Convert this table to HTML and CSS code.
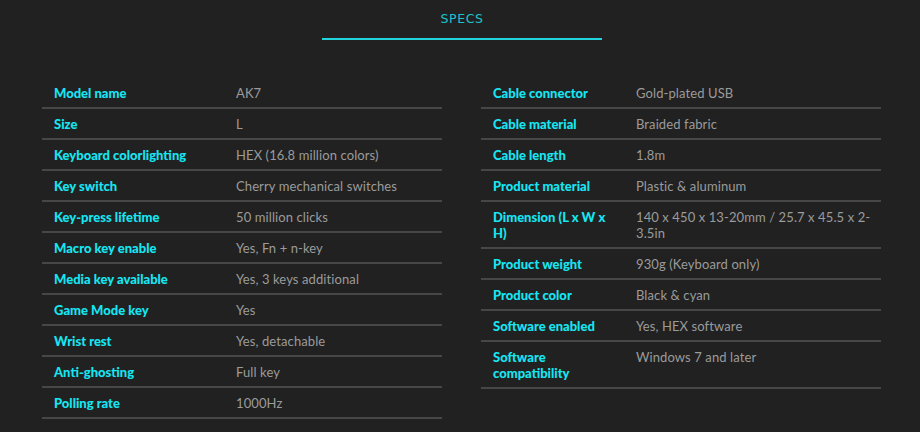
FILE: index.html
```html
<!DOCTYPE html>
<html lang="en">
<head>
<meta charset="utf-8">
<title>Specs</title>
<link rel="stylesheet" href="styles.css">
</head>
<body>
<section class="specs">
  <header class="specs-head">
    <h2 class="specs-title">SPECS</h2>
  </header>
  <div class="specs-grid">
    <div class="spec-table left">
      <div class="row"><div class="k">Model name</div><div class="v">AK7</div></div>
      <div class="row"><div class="k">Size</div><div class="v">L</div></div>
      <div class="row"><div class="k">Keyboard colorlighting</div><div class="v">HEX (16.8 million colors)</div></div>
      <div class="row"><div class="k">Key switch</div><div class="v">Cherry mechanical switches</div></div>
      <div class="row"><div class="k">Key-press lifetime</div><div class="v">50 million clicks</div></div>
      <div class="row"><div class="k">Macro key enable</div><div class="v">Yes, Fn + n-key</div></div>
      <div class="row"><div class="k">Media key available</div><div class="v">Yes, 3 keys additional</div></div>
      <div class="row"><div class="k">Game Mode key</div><div class="v">Yes</div></div>
      <div class="row"><div class="k">Wrist rest</div><div class="v">Yes, detachable</div></div>
      <div class="row"><div class="k">Anti-ghosting</div><div class="v">Full key</div></div>
      <div class="row"><div class="k">Polling rate</div><div class="v">1000Hz</div></div>
    </div>
    <div class="spec-table right">
      <div class="row"><div class="k">Cable connector</div><div class="v">Gold-plated USB</div></div>
      <div class="row"><div class="k">Cable material</div><div class="v">Braided fabric</div></div>
      <div class="row"><div class="k">Cable length</div><div class="v">1.8m</div></div>
      <div class="row"><div class="k">Product material</div><div class="v">Plastic &amp; aluminum</div></div>
      <div class="row"><div class="k">Dimension (L x W x H)</div><div class="v">140 x 450 x 13-20mm / 25.7 x 45.5 x 2-3.5in</div></div>
      <div class="row"><div class="k">Product weight</div><div class="v">930g (Keyboard only)</div></div>
      <div class="row"><div class="k">Product color</div><div class="v">Black &amp; cyan</div></div>
      <div class="row"><div class="k">Software enabled</div><div class="v">Yes, HEX software</div></div>
      <div class="row"><div class="k">Software compatibility</div><div class="v">Windows 7 and later</div></div>
    </div>
  </div>
</section>
</body>
</html>
```

FILE: styles.css
```css
html, body {
  margin: 0;
  padding: 0;
  background: #212121;
  height: 100%;
}
body {
  font-family: "Lato", "Liberation Sans", sans-serif;
  overflow: hidden;
}
.specs {
  display: flex;
  flex-direction: column;
  align-items: stretch;
}
.specs-head {
  display: flex;
  justify-content: center;
  padding-left: 4px;
}
.specs-title {
  margin: 0;
  width: 280px;
  box-sizing: border-box;
  padding-top: 11px;
  height: 40px;
  border-bottom: 2px solid #22d3dc;
  text-align: center;
  font-family: "DejaVu Sans", sans-serif;
  font-weight: normal;
  font-size: 12.5px;
  letter-spacing: 0.6px;
  color: #1cc3cb;
  line-height: 16px;
}
.specs-grid {
  display: grid;
  grid-template-columns: 400px 400px;
  column-gap: 39px;
  padding: 38px 0 0 42px;
}
.spec-table {
  display: flex;
  flex-direction: column;
}
.row {
  display: grid;
  padding: 7px 0 6px 12px;
  border-bottom: 2px solid #474747;
  font-size: 13px;
  line-height: 16px;
}
.left .row { grid-template-columns: 182px 1fr; }
.right .row { grid-template-columns: 143px 1fr; padding-right: 6px; }
.k {
  color: #16e6f2;
  font-weight: 900;
  letter-spacing: 0;
  padding-right: 18px;
}
.v {
  color: #9b9b9b;
  letter-spacing: 0.1px;
}
```
